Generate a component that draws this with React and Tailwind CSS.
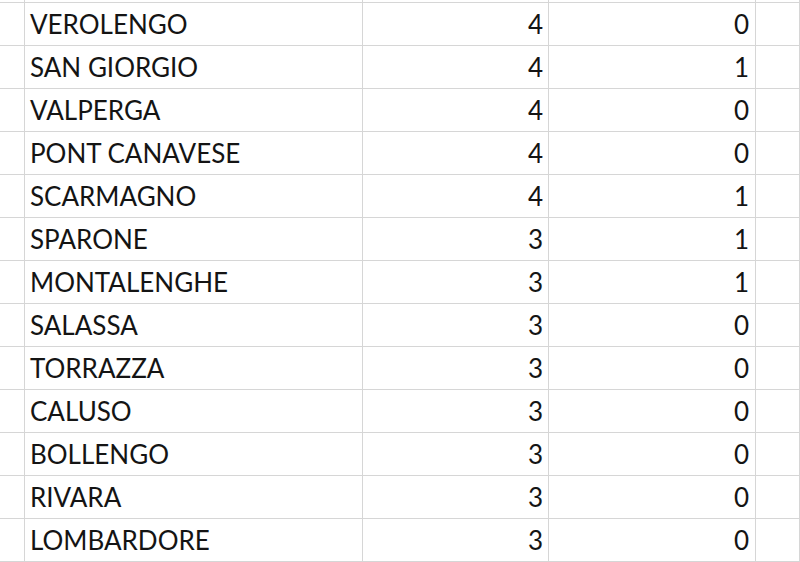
import React from 'react';

const rows = [
    ['VEROLENGO', 4, 0],
    ['SAN GIORGIO', 4, 1],
    ['VALPERGA', 4, 0],
    ['PONT CANAVESE', 4, 0],
    ['SCARMAGNO', 4, 1],
    ['SPARONE', 3, 1],
    ['MONTALENGHE', 3, 1],
    ['SALASSA', 3, 0],
    ['TORRAZZA', 3, 0],
    ['CALUSO', 3, 0],
    ['BOLLENGO', 3, 0],
    ['RIVARA', 3, 0],
    ['LOMBARDORE', 3, 0],
];

const cell = 'border-r border-b border-[#d6d6d6] box-border';

const App = () => {
    return (
        <div className="w-[800px] h-[562px] overflow-hidden bg-white text-[#141414] font-['Lato',sans-serif] text-[26px] leading-none">
            <div className="grid grid-cols-[25px_338px_186px_207px_1fr]">
                {/* top sliver of the row above */}
                <div className={`${cell} h-[3px]`} />
                <div className={`${cell} h-[3px]`} />
                <div className={`${cell} h-[3px]`} />
                <div className={`${cell} h-[3px]`} />
                <div className={`${cell} h-[3px]`} />

                {rows.map(([name, a, b]) => (
                    <React.Fragment key={name}>
                        <div className={`${cell} h-[43px]`} />
                        <div className={`${cell} h-[43px] flex items-end pl-[5px] pb-[8px]`}>{name}</div>
                        <div className={`${cell} h-[43px] flex items-end justify-end pr-[5px] pb-[8px]`}>{a}</div>
                        <div className={`${cell} h-[43px] flex items-end justify-end pr-[6px] pb-[8px]`}>{b}</div>
                        <div className={`${cell} h-[43px]`} />
                    </React.Fragment>
                ))}
            </div>
        </div>
    );
};

export default App;
